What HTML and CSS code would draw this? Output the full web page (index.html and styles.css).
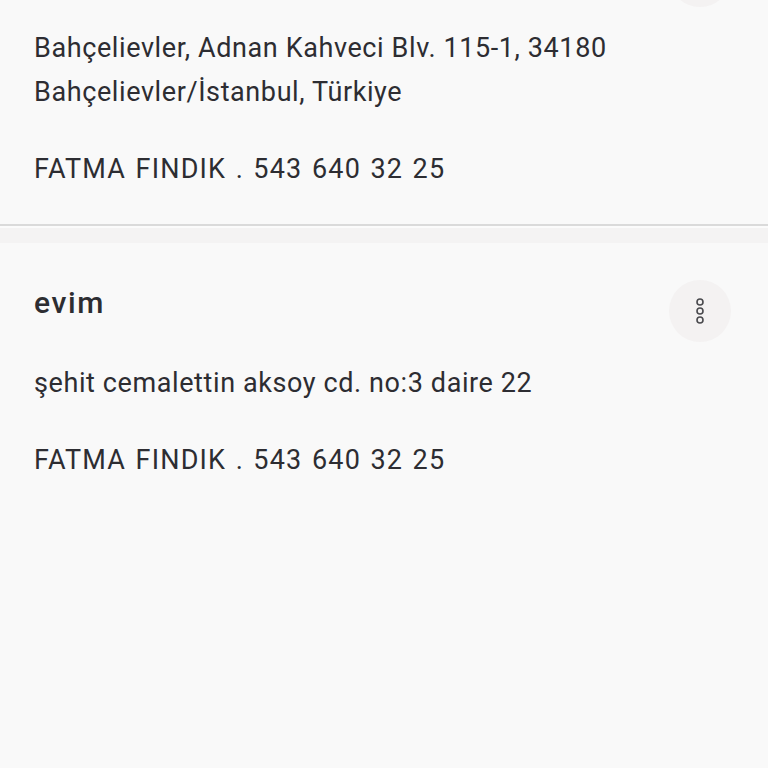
FILE: index.html
```html
<!DOCTYPE html>
<html lang="tr">
<head>
    <meta charset="UTF-8">
    <meta name="viewport" content="width=device-width, initial-scale=1.0">
    <title>Adreslerim</title>
    <link rel="stylesheet" href="styles.css">
</head>
<body>

    <div class="address-list">

        <!-- scrolled past: only the bottom of this card is on screen -->
        <div class="address-card">
            <div class="card-header">
                <div class="card-title"></div>
                <button class="menu-btn" aria-label="Menü">
                    <svg width="12" height="28" viewBox="0 0 12 28">
                        <circle cx="6" cy="5" r="3" />
                        <circle cx="6" cy="14" r="3" />
                        <circle cx="6" cy="23" r="3" />
                    </svg>
                </button>
            </div>
            <p class="card-address">Bahçelievler, Adnan Kahveci Blv. 115-1, 34180<br>Bahçelievler/İstanbul, Türkiye</p>
            <p class="card-contact">FATMA FINDIK . 543 640 32 25</p>
        </div>

        <div class="card-separator"></div>

        <div class="address-card">
            <div class="card-header">
                <h2 class="card-title">evim</h2>
                <button class="menu-btn" aria-label="Menü">
                    <svg width="12" height="28" viewBox="0 0 12 28">
                        <circle cx="6" cy="5" r="3" />
                        <circle cx="6" cy="14" r="3" />
                        <circle cx="6" cy="23" r="3" />
                    </svg>
                </button>
            </div>
            <p class="card-address">şehit cemalettin aksoy cd. no:3 daire 22</p>
            <p class="card-contact">FATMA FINDIK . 543 640 32 25</p>
        </div>

    </div>

</body>
</html>
```

FILE: styles.css
```css
body {
    margin: 0;
    padding: 0;
    background-color: #f9f9f9;
    font-family: Roboto, "Liberation Sans", sans-serif;
    color: #2d2d32;
    overflow: hidden;
}

/* list is scrolled, first card starts above the viewport */
.address-list {
    margin-top: -92px;
}

.address-card {
    padding: 37px 34px 33px;
    border-bottom: 2px solid #dadada;
}

.address-card:last-child {
    border-bottom: none;
}

.card-header {
    display: flex;
    justify-content: space-between;
    align-items: flex-start;
    height: 62px;
    margin-bottom: 19px;
}

.card-title {
    margin: 1px 0 0;
    font-size: 30px;
    font-weight: 500;
    line-height: 44px;
    letter-spacing: 1.6px;
}

.menu-btn {
    width: 62px;
    height: 62px;
    margin-right: 3px;
    border: none;
    border-radius: 50%;
    background-color: #f4f2f2;
    display: flex;
    align-items: center;
    justify-content: center;
    padding: 0;
    cursor: pointer;
}

.menu-btn svg {
    fill: none;
    stroke: #4a4a4e;
    stroke-width: 1.6;
}

.card-address,
.card-contact {
    margin: 0;
    font-size: 27px;
    line-height: 44px;
    letter-spacing: 0.6px;
}

.card-address {
    margin-bottom: 33px;
}

.card-contact {
    letter-spacing: 1.2px;
    word-spacing: 1.5px;
}

.card-separator {
    height: 15px;
    border-top: 2px solid #fbfbfb;
    background-color: #f4f3f3;
}
```
